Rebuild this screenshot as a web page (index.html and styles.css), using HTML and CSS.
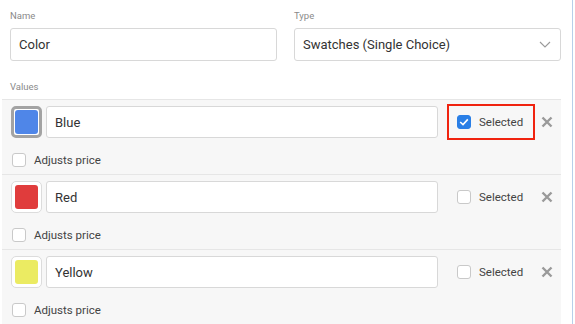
FILE: index.html
```html
<!DOCTYPE html>
<html lang="en">
<head>
  <meta charset="utf-8">
  <title>Option Editor</title>
  <link rel="stylesheet" href="styles.css">
</head>
<body>
  <div class="panel">
    <div class="fields">
      <div class="field">
        <label class="label">Name</label>
        <div class="input big">Color</div>
      </div>
      <div class="field">
        <label class="label">Type</label>
        <div class="input big select">
          <span>Swatches (Single Choice)</span>
          <svg class="chevron" width="12" height="7" viewBox="0 0 12 7">
            <polyline points="1,1 6,6 11,1" fill="none" stroke="#9a9a9a" stroke-width="1.1"/>
          </svg>
        </div>
      </div>
    </div>

    <div class="label values-label">Values</div>

    <ul class="values">
      <li class="value">
        <div class="value-main">
          <div class="swatch active"><span class="swatch-color" style="background:#4f86e8"></span></div>
          <div class="input">Blue</div>
          <div class="selected highlight">
            <span class="check checked">
              <svg width="10" height="8" viewBox="0 0 10 8"><polyline points="1.2,4 4,6.6 8.8,1.4" fill="none" stroke="#fff" stroke-width="1.6"/></svg>
            </span>
            Selected
          </div>
          <svg class="remove" width="12" height="12" viewBox="0 0 12 12">
            <path d="M1.5 1.5 L10.5 10.5 M10.5 1.5 L1.5 10.5" stroke="#9a9a9a" stroke-width="2.4"/>
          </svg>
        </div>
        <div class="adjust"><span class="check"></span>Adjusts price</div>
      </li>
      <li class="value">
        <div class="value-main">
          <div class="swatch"><span class="swatch-color" style="background:#e03c3c"></span></div>
          <div class="input">Red</div>
          <div class="selected"><span class="check"></span>Selected</div>
          <svg class="remove" width="12" height="12" viewBox="0 0 12 12">
            <path d="M1.5 1.5 L10.5 10.5 M10.5 1.5 L1.5 10.5" stroke="#9a9a9a" stroke-width="2.4"/>
          </svg>
        </div>
        <div class="adjust"><span class="check"></span>Adjusts price</div>
      </li>
      <li class="value">
        <div class="value-main">
          <div class="swatch"><span class="swatch-color" style="background:#ebeb62"></span></div>
          <div class="input">Yellow</div>
          <div class="selected"><span class="check"></span>Selected</div>
          <svg class="remove" width="12" height="12" viewBox="0 0 12 12">
            <path d="M1.5 1.5 L10.5 10.5 M10.5 1.5 L1.5 10.5" stroke="#9a9a9a" stroke-width="2.4"/>
          </svg>
        </div>
        <div class="adjust"><span class="check"></span>Adjusts price</div>
      </li>
    </ul>
  </div>
</body>
</html>
```

FILE: styles.css
```css
body {
  margin: 0;
  font-family: Roboto, "Liberation Sans", Arial, sans-serif;
  color: #333;
  background-color: #fff;
  overflow: hidden;
}
.panel {
  width: 573px;
  min-height: 100vh;
  border-right: 1px solid #b7cfea;
  padding: 10px 11px 0 10px;
  box-sizing: border-box;
}
.fields {
  display: grid;
  grid-template-columns: 267px 267px;
  column-gap: 17px;
}
.label {
  display: block;
  font-size: 9.5px;
  line-height: 12px;
  color: #8a8a8a;
  margin-bottom: 6px;
}
.input {
  box-sizing: border-box;
  height: 32px;
  border: 1px solid #d8d8d8;
  border-radius: 3px;
  background-color: #fff;
  padding: 0 8px;
  font-size: 13px;
  display: flex;
  align-items: center;
}
.input.big {
  height: 33px;
}
.select {
  justify-content: space-between;
  padding-right: 9px;
}
.values-label {
  margin-top: 20px;
}
.values {
  list-style: none;
  margin: 0 0 0 -8px;
  padding: 0;
}
.value {
  background-color: #f7f7f7;
  border-top: 1px solid #e6e6e6;
  padding: 6px 8px 7px 9px;
}
.value-main {
  display: flex;
  align-items: center;
  height: 32px;
}
.swatch {
  box-sizing: border-box;
  width: 31px;
  height: 32px;
  border: 1px solid #dcdcdc;
  border-radius: 5px;
  background-color: #fff;
  padding: 3px;
  display: flex;
}
.swatch.active {
  border: 3px solid #a3a3a3;
  padding: 1px;
}
.swatch-color {
  flex: 1;
  border-radius: 3px;
}
.value-main .input {
  flex: 1;
  margin-left: 4px;
}
.selected {
  display: flex;
  align-items: center;
  width: 88px;
  height: 36px;
  margin: -2px 0 -2px 9px;
  box-sizing: border-box;
  border: 2px solid transparent;
  padding-left: 8px;
  font-size: 11.5px;
  color: #444;
}
.selected.highlight {
  border-color: #f0230f;
}
.check {
  box-sizing: border-box;
  width: 14px;
  height: 14px;
  border: 1px solid #c9c9c9;
  border-radius: 3px;
  background-color: #fff;
  margin-right: 8px;
  display: inline-flex;
  align-items: center;
  justify-content: center;
  flex-shrink: 0;
}
.check.checked {
  background-color: #2a7fe6;
  border-color: #2a7fe6;
}
.remove {
  margin-left: 6px;
}
.adjust {
  display: flex;
  align-items: center;
  height: 14px;
  margin-top: 15px;
  padding-left: 1px;
  font-size: 11.5px;
  color: #444;
}
```
